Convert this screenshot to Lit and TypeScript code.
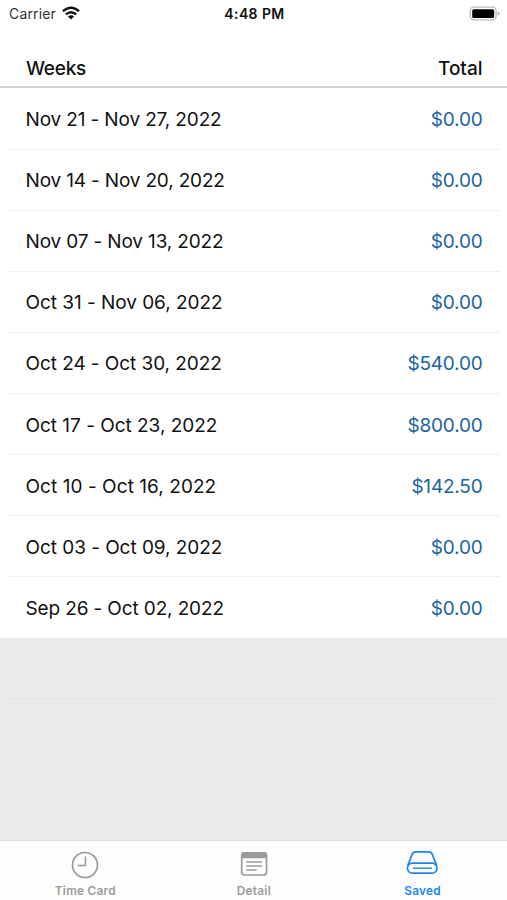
import { LitElement, html, css, svg } from "lit";
import { customElement } from "lit/decorators.js";
import { styleMap } from "lit/directives/style-map.js";

interface Week { range: string; total: string; tracking: number; }

const WEEKS: Week[] = [
  { range: "Nov 21 - Nov 27, 2022", total: "$0.00", tracking: -0.14 },
  { range: "Nov 14 - Nov 20, 2022", total: "$0.00", tracking: -0.17 },
  { range: "Nov 07 - Nov 13, 2022", total: "$0.00", tracking: -0.15 },
  { range: "Oct 31 - Nov 06, 2022", total: "$0.00", tracking: -0.04 },
  { range: "Oct 24 - Oct 30, 2022", total: "$540.00", tracking: -0.07 },
  { range: "Oct 17 - Oct 23, 2022", total: "$800.00", tracking: -0.02 },
  { range: "Oct 10 - Oct 16, 2022", total: "$142.50", tracking: 0.06 },
  { range: "Oct 03 - Oct 09, 2022", total: "$0.00", tracking: -0.05 },
  { range: "Sep 26 - Oct 02, 2022", total: "$0.00", tracking: -0.13 },
];

const clockIcon = svg`
  <circle cx="17" cy="15" r="12.5" stroke-width="1.7"/>
  <path d="M17.4 6.6V15.5H9.8" stroke-width="1.5"/>`;

const detailIcon = svg`
  <rect x="4.7" y="2.8" width="24.8" height="22.2" rx="2.8" stroke-width="1.7"/>
  <path d="M4 8.3V5.2Q4 2 7.2 2H27Q30.2 2 30.2 5.2V8.3Z" fill="currentColor" stroke="none"/>
  <path d="M9.2 12H25M9.2 16H25M9.2 20H19.6" stroke-width="1.3"/>`;

const savedIcon = svg`
  <path d="M2.9 15.2L7.1 4.4Q8.1 1.9 10.9 1.9H23.5Q26.3 1.9 27.3 4.4L31.5 15.2" stroke-width="1.7"/>
  <rect x="2.4" y="13.2" width="29.6" height="10" rx="5" stroke-width="1.7"/>
  <path d="M7.8 18.2H27" stroke-width="1.4"/>`;

@customElement("app-root")
export class AppRoot extends LitElement {
  static styles = css`
    :host {
      display: flex;
      flex-direction: column;
      height: 900px;
      background: #fff;
      color: #111;
      font-family: Inter, "Liberation Sans", sans-serif;
      overflow: hidden;
    }
    .status {
      display: grid;
      grid-template-columns: 1fr auto 1fr;
      align-items: center;
      height: 28px;
      padding: 0 7px 0 9px;
      box-sizing: border-box;
      font-size: 14px;
      line-height: 20px;
    }
    .carrier { display: flex; align-items: center; gap: 6px; color: #333; }
    .carrier span { letter-spacing: 0.15px; }
    .wifi { width: 18px; height: 14px; margin-top: -3px; }
    .time { font-weight: 600; font-size: 14px; letter-spacing: 0.4px; }
    .battery { width: 31px; height: 15px; justify-self: end; margin-top: -2px; }
    .head {
      display: flex;
      justify-content: space-between;
      height: 60px;
      box-sizing: border-box;
      padding: 29px 24.5px 0 26px;
      border-bottom: 2px solid #d2d2d2;
      font-size: 19px;
      font-weight: 500;
      line-height: 24px;
      letter-spacing: -0.25px;
    }
    .head span:last-child { letter-spacing: 0; }
    .list { flex: 1; margin-top: 0.5px; background: #eaeaea; overflow: hidden; }
    .row {
      display: flex;
      justify-content: space-between;
      align-items: center;
      height: 61.1px;
      box-sizing: border-box;
      padding: 1px 24.5px 0 25.5px;
      background: linear-gradient(#f0f0f0, #f0f0f0) 8px 100% / 492px 1px no-repeat #fff;
      font-size: 19px;
    }
    .row:last-of-type { background: #fff; }
    .amount { color: #1c63a0; letter-spacing: -0.2px; }
    .blank {
      height: 61px;
      margin: 0 7px 0 8px;
      box-sizing: border-box;
      border-bottom: 1px solid #e3e3e3;
    }
    .blank.faint { border-color: #e8e8e8; }
    .tabs {
      display: grid;
      grid-template-columns: repeat(3, 168.6px);
      height: 60px;
      box-sizing: border-box;
      padding-left: 1px;
      border-top: 1px solid #dedede;
      background: #fdfdfd;
    }
    .tab {
      display: flex;
      flex-direction: column;
      align-items: center;
      padding-top: 9px;
      color: #9b9b9b;
      font-size: 11.8px;
      font-weight: 600;
      line-height: 16px;
      letter-spacing: 0.25px;
    }
    .tab svg { width: 34px; height: 33px; fill: none; stroke: currentColor; }
    .tab.active { color: #1c83f2; }
  `;

  render() {
    return html`
      <div class="status">
        <div class="carrier">
          <span>Carrier</span>
          <svg class="wifi" viewBox="0 0 18 14" fill="none" stroke="#111" stroke-width="2.4">
            <path d="M.9 5.2Q9-1.9 17.1 5.2"/>
            <path d="M3.8 8.4Q9 3.9 14.2 8.4"/>
            <path d="M9 13.6L5.9 10.5Q9 8.2 12.1 10.5Z" fill="#111" stroke="none"/>
          </svg>
        </div>
        <div class="time">4:48 PM</div>
        <svg class="battery" viewBox="0 0 31 15">
          <rect x="1.3" y="1.1" width="25.8" height="12.8" rx="3.6" fill="#fff" stroke="#bcbcbc" stroke-width="1.4"/>
          <rect x="3.2" y="3.2" width="22" height="8.8" rx="1.6" fill="#000"/>
          <path d="M28.6 5.2Q30.8 6 30.8 7.5T28.6 9.8Z" fill="#b4b4b4"/>
        </svg>
      </div>
      <div class="head"><span>Weeks</span><span>Total</span></div>
      <div class="list">
        ${WEEKS.map((w) => html`
          <section class="row">
            <span style=${styleMap({ letterSpacing: `${w.tracking}px` })}>${w.range}</span>
            <span class="amount">${w.total}</span>
          </section>`)}
        <div class="blank"></div>
        <div class="blank faint"></div>
        <div class="blank faint"></div>
      </div>
      <nav class="tabs">
        <div class="tab"><svg viewBox="0 0 34 33">${clockIcon}</svg>Time Card</div>
        <div class="tab"><svg viewBox="0 0 34 33">${detailIcon}</svg>Detail</div>
        <div class="tab active"><svg viewBox="0 0 34 33">${savedIcon}</svg>Saved</div>
      </nav>
    `;
  }
}
